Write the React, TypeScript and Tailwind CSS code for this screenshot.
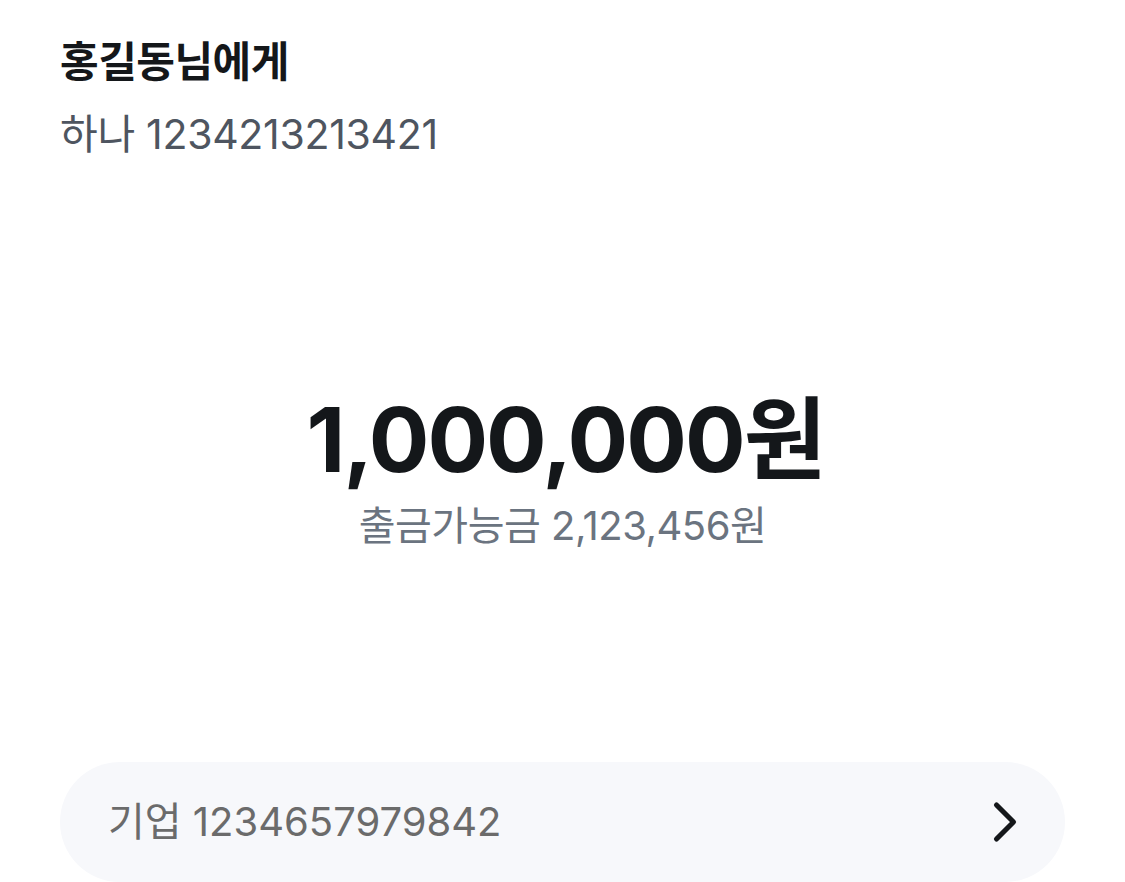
import { ChevronRight } from "lucide-react";

const FONT = "font-['Inter','Noto_Sans_CJK_KR',sans-serif]";

export default function App() {
  return (
    <div className={`${FONT} h-[882px] w-full overflow-hidden bg-white px-[60px]`}>
      {/* 받는 사람 */}
      <div className="pt-[34px]">
        <h1 className="text-[42px] font-bold leading-[56px] tracking-[-0.5px] text-[#14171a]">
          홍길동님에게
        </h1>
        <p className="mt-[18px] text-[41px] leading-[52px] tracking-[-0.3px] text-[#4e5560]">
          하나 1234213213421
        </p>
      </div>

      {/* 금액 */}
      <div className="mt-[230px] flex flex-col items-center">
        <div className="pl-[6px] text-[90px] font-bold leading-[100px] tracking-[-2px] text-[#14171a]">
          1,000,000원
        </div>
        <div className="mt-[10px] text-[40px] leading-[52px] tracking-[-0.5px] text-[#6b7480]">
          출금가능금 2,123,456원
        </div>
      </div>

      {/* 출금 계좌 */}
      <button className="mt-[210px] flex h-[120px] w-full items-center justify-between rounded-[60px] bg-[#f7f8fb] pl-[48px] pr-[26px]">
        <span className="text-[40px] text-[#6b6b6b]">기업 1234657979842</span>
        <ChevronRight className="h-[68px] w-[68px] text-[#14171a]" strokeWidth={1.8} />
      </button>
    </div>
  );
}
